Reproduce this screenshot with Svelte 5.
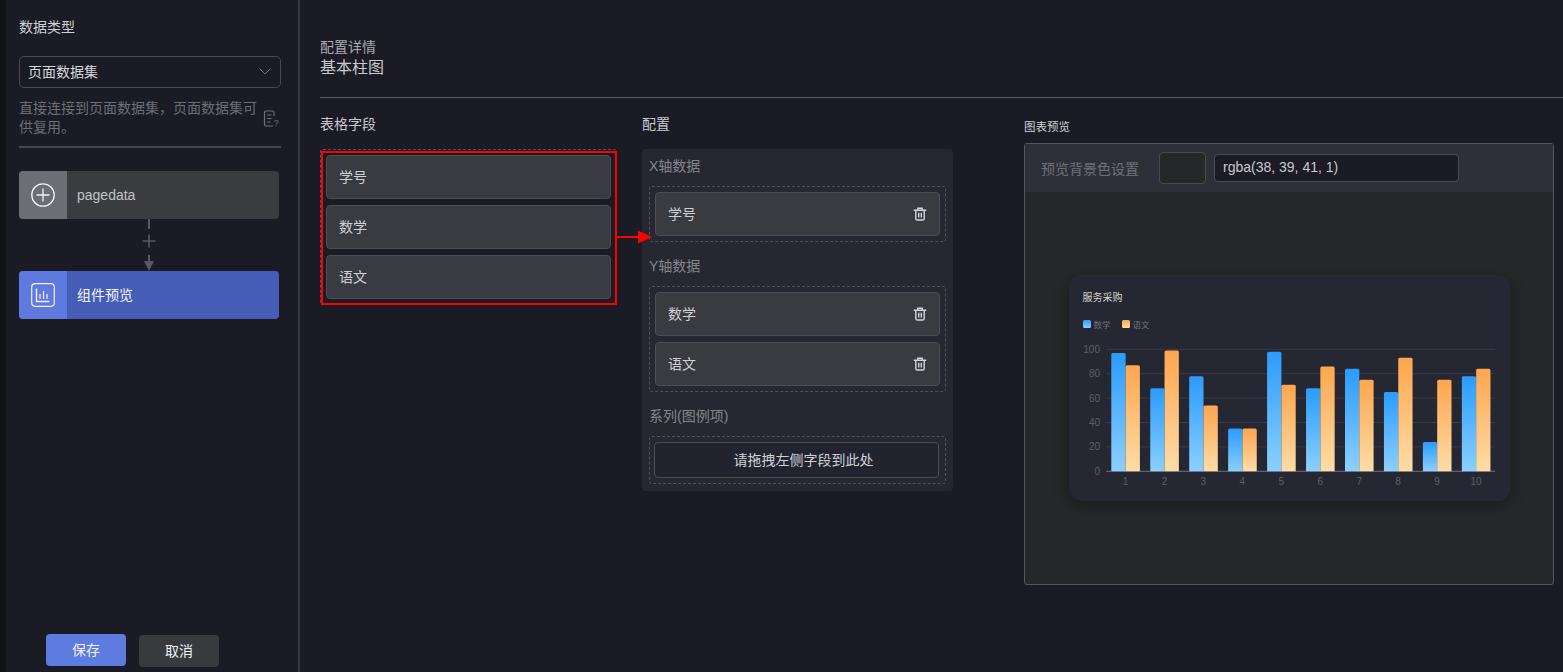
<script>
  const math = [97, 68, 78, 35, 98, 68, 84, 65, 24, 78];
  const chinese = [87, 99, 54, 35, 71, 86, 75, 93, 75, 84];
  const ticks = [0, 20, 40, 60, 80, 100];
  const y0 = 131.3;
  const unit = 1.22;
  const step = 38.95;
  const fields = ['学号', '数学', '语文'];
</script>

{#snippet trash()}
  <svg class="trash" viewBox="0 0 14 14" width="14" height="14" fill="none" stroke="#d5d6da" stroke-width="1.4">
    <path d="M.8 3.200h12.400M4.800 3V1.200h4.400V3M2.800 3.400v8.200c0 .8.4 1.400 1.200 1.400h6c.8 0 1.200-.6 1.200-1.400V3.400" />
    <path d="M5.700 5.800v4.600M8.300 5.800v4.600" />
  </svg>
{/snippet}

<div class="page">
  <div class="strip"></div>
  <aside class="side">
    <div class="side-title">数据类型</div>
    <div class="select">
      <span>页面数据集</span>
      <svg viewBox="0 0 12 7" width="12" height="7" fill="none" stroke="#70727a" stroke-width="1"><path d="M.5.500l5.500 5.500 5.500-5.500" /></svg>
    </div>
    <div class="desc">
      <p>直接连接到页面数据集，页面数据集可供复用。</p>
      <svg viewBox="0 0 16 17" width="16" height="17" fill="none" stroke="#6d6f77" stroke-width="1.200">
        <path d="M10 16H3c-.9 0-1.500-.6-1.500-1.500v-12C1.500 1.600 2.100 1 3 1h6.500c.9 0 1.500.6 1.500 1.500V6" />
        <path d="M4 5h4.500M4 8.500h4.500M4 12h3.500" />
        <text class="q" x="10.800" y="15.500" fill="#6d6f77" stroke="none">?</text>
      </svg>
    </div>
    <div class="side-line"></div>

    <div class="node">
      <div class="node-icon">
        <svg viewBox="0 0 24 24" width="24" height="24" fill="none" stroke="#f2f2f4" stroke-width="1.300">
          <circle cx="12" cy="12" r="11.200" /><path d="M12 5.500v13M5.500 12h13" />
        </svg>
      </div>
      <span class="latin">pagedata</span>
    </div>
    <svg class="link" viewBox="0 0 16 52" width="16" height="52" fill="none" stroke="#575961" stroke-width="2">
      <path d="M8 0v10" />
      <path d="M8 15.500v13M1.500 22h13" stroke-width="1.600" />
      <path d="M8 36v8" />
      <path d="M3 42h10l-5 10z" fill="#575961" stroke="none" />
    </svg>
    <div class="node active">
      <div class="node-icon">
        <svg viewBox="0 0 24 24" width="24" height="24" fill="none" stroke="#f2f2f8" stroke-width="1.200">
          <rect x=".7" y=".7" width="22.600" height="22.600" rx="3.500" />
          <path d="M5.500 5.500v13h13" stroke-width="1.400" /><path d="M9 11v5M12.500 8v8M16 11v5" />
        </svg>
      </div>
      <span>组件预览</span>
    </div>

    <div class="actions">
      <button class="save"><span>保存</span></button>
      <button class="cancel"><span>取消</span></button>
    </div>
  </aside>

  <main class="main">
    <header class="head">
      <div class="crumb">配置详情</div>
      <div class="name">基本柱图</div>
    </header>
    <div class="rule"></div>

    <div class="columns">
      <section class="col-fields">
        <h3>表格字段</h3>
        <div class="field-box">
          {#each fields as f}
            <div class="item">{f}</div>
          {/each}
          <div class="red-frame"></div>
          <svg class="red-arrow" viewBox="0 0 35 14" width="35" height="14">
            <path d="M0 6h21v-5.500l14 6.500-14 6.500v-5.500H0z" fill="#ff0000" />
          </svg>
        </div>
      </section>

      <section class="col-config">
        <h3>配置</h3>
        <div class="panel">
          <div class="axis">X轴数据</div>
          <div class="drop">
            <div class="item">学号 {@render trash()}</div>
          </div>
          <div class="axis">Y轴数据</div>
          <div class="drop">
            <div class="item">数学 {@render trash()}</div>
            <div class="item">语文 {@render trash()}</div>
          </div>
          <div class="axis">系列(图例项)</div>
          <div class="drop tight">
            <div class="placeholder">请拖拽左侧字段到此处</div>
          </div>
        </div>
      </section>

      <section class="col-preview">
        <h4>图表预览</h4>
        <div class="preview">
          <div class="bar">
            <span class="bar-label">预览背景色设置</span>
            <div class="swatch"></div>
            <div class="color-input">rgba(38, 39, 41, 1)</div>
          </div>
          <div class="stage">
            <div class="card">
              <div class="card-title">服务采购</div>
              <div class="legend">
                <i class="blue"></i><span>数学</span>
                <i class="orange"></i><span>语文</span>
              </div>
              <svg class="plot" viewBox="0 0 441 161" width="441" height="161">
                <defs>
                  <linearGradient id="gb" x1="0" y1="0" x2="0" y2="1">
                    <stop offset="0" stop-color="#2b9bfd" /><stop offset="1" stop-color="#8bd0fe" />
                  </linearGradient>
                  <linearGradient id="go" x1="0" y1="0" x2="0" y2="1">
                    <stop offset="0" stop-color="#fda64f" /><stop offset="1" stop-color="#fedca6" />
                  </linearGradient>
                </defs>
                {#each ticks as t}
                  <line x1="37" x2="426" y1={y0 - t * unit} y2={y0 - t * unit} stroke={t === 0 ? '#6e7078' : '#383a44'} />
                  <text class="tick" x="31" y={y0 - t * unit + 3.500} text-anchor="end">{t}</text>
                {/each}
                {#each math as v, i}
                  <path fill="url(#gb)" d={`M${42.3 + i * step} ${y0}v${-(v * unit - 1.500)}q0 -1.500 1.500 -1.500h11.300q1.500 0 1.500 1.500v${v * unit - 1.500}z`} />
                  <path fill="url(#go)" d={`M${56.6 + i * step} ${y0}v${-(chinese[i] * unit - 1.500)}q0 -1.500 1.500 -1.500h11.300q1.500 0 1.500 1.500v${chinese[i] * unit - 1.500}z`} />
                  <text class="tick" x={56.5 + i * step} y="145" text-anchor="middle">{i + 1}</text>
                {/each}
              </svg>
            </div>
          </div>
        </div>
      </section>
    </div>
  </main>
</div>

<style>
  :global(body) {
    margin: 0;
    background: #1a1b24;
  }
  .page {
    display: flex;
    height: 672px;
    overflow: hidden;
    background: #1a1b24;
    color: #c9cad0;
    font-family: "Liberation Sans", "Noto Sans CJK SC", sans-serif;
    font-size: 14px;
  }
  .strip {
    width: 6px;
    flex: none;
    background: #111214;
  }
  .side {
    width: 294px;
    flex: none;
    box-sizing: border-box;
    padding: 19px 17px 5px 13px;
    display: flex;
    flex-direction: column;
    border-right: 2px solid #37383d;
  }
  .side-title {
    font-size: 14px;
    line-height: 17px;
    color: #d0d1d6;
  }
  .select {
    margin-top: 20px;
    height: 32px;
    box-sizing: border-box;
    border: 1px solid #4a4b52;
    border-radius: 5px;
    padding: 0 9px 2px 8px;
    display: flex;
    align-items: center;
    justify-content: space-between;
    color: #d6d7db;
  }
  .desc {
    margin-top: 11px;
    display: flex;
    align-items: center;
    justify-content: space-between;
    color: #6d6f77;
    line-height: 19px;
  }
  .desc p {
    margin: 0;
    width: 240px;
  }
  .desc svg {
    margin-right: 2px;
  }
  .q {
    font-size: 9px;
    font-family: "Liberation Sans", sans-serif;
  }
  .side-line {
    margin-top: 9px;
    height: 2px;
    background: #46474e;
  }
  .node {
    margin-top: 23px;
    width: 260px;
    height: 48px;
    flex: none;
    display: flex;
    align-items: center;
    border-radius: 4px;
    overflow: hidden;
    background: #3b3c40;
    color: #c2c3c9;
  }
  .node span {
    margin: 0 0 2px 10px;
  }
  .node span.latin {
    margin-bottom: 0;
  }
  .node-icon {
    width: 48px;
    height: 48px;
    display: flex;
    align-items: center;
    justify-content: center;
    background: #6c6e76;
  }
  .node.active {
    margin-top: 0;
    background: #465db8;
    color: #f4f5fa;
  }
  .node.active .node-icon {
    background: #5e7adf;
  }
  .link {
    display: block;
    margin-left: 122px;
    flex: none;
  }
  .actions {
    margin-top: auto;
    display: flex;
    margin-left: 27px;
    gap: 13px;
    align-items: flex-start;
  }
  .actions button {
    width: 80px;
    height: 32px;
    border: 0;
    border-radius: 4px;
    font: inherit;
    color: #f0f1f4;
    padding: 0 0 2px;
  }
  .save {
    background: #5e7ce0;
  }
  .cancel {
    background: #393a3e;
    margin-top: 1px;
  }
  .main {
    flex: 1;
    min-width: 0;
    padding-left: 20px;
  }
  .head {
    padding-top: 38px;
    height: 59px;
  }
  .crumb {
    font-size: 14px;
    line-height: 19px;
    color: #a9aab0;
  }
  .name {
    font-size: 16px;
    line-height: 22px;
    color: #c9cad0;
  }
  .rule {
    height: 1px;
    background: #5b5c62;
  }
  .columns {
    display: flex;
    align-items: flex-start;
  }
  h3,
  h4 {
    margin: 0;
    font-weight: 400;
    color: #c9cad0;
  }
  h3 {
    font-size: 14px;
    line-height: 17px;
    height: 33px;
    padding-top: 18px;
  }
  .col-fields {
    width: 297px;
    margin-right: 25px;
    flex: none;
  }
  .field-box {
    position: relative;
    box-sizing: border-box;
    height: 156px;
    border: 1px dashed #53545c;
    border-radius: 3px;
    padding: 5px;
    display: flex;
    flex-direction: column;
    gap: 6px;
  }
  .item {
    height: 44px;
    flex: none;
    box-sizing: border-box;
    border: 1px solid #4c4d55;
    border-radius: 4px;
    background: #3a3b40;
    padding: 0 12px 2px;
    display: flex;
    align-items: center;
    justify-content: space-between;
    color: #cfd0d5;
  }
  .red-frame {
    position: absolute;
    left: 0;
    top: 1px;
    width: 296px;
    height: 154px;
    box-sizing: border-box;
    border: 2px solid #ff0000;
    pointer-events: none;
  }
  .red-arrow {
    position: absolute;
    left: 296px;
    top: 80px;
  }
  .col-config {
    width: 311px;
    margin-right: 71px;
    flex: none;
  }
  .panel {
    box-sizing: border-box;
    height: 342px;
    background: #262730;
    border-radius: 4px;
    padding: 7px;
  }
  .axis {
    height: 20px;
    line-height: 20px;
    margin-bottom: 10px;
    color: #85868c;
  }
  .drop {
    box-sizing: border-box;
    border: 1px dashed #50515a;
    border-radius: 3px;
    padding: 5px;
    display: flex;
    flex-direction: column;
    gap: 6px;
    margin-bottom: 14px;
  }
  .drop.tight {
    padding: 5px 6px 5px 4px;
    margin-bottom: 0;
  }
  .placeholder {
    height: 36px;
    box-sizing: border-box;
    border: 1px solid #4a4c56;
    border-radius: 4px;
    background: #21242f;
    display: flex;
    align-items: center;
    justify-content: center;
    color: #d0d2d8;
    padding: 0 0 2px 14px;
  }
  .trash {
    margin-top: 2px;
  }
  .col-preview {
    width: 530px;
    flex: none;
  }
  h4 {
    font-size: 11.500px;
    line-height: 16px;
    padding-top: 21px;
    height: 24px;
    color: #d0d1d6;
  }
  .preview {
    box-sizing: border-box;
    height: 442px;
    border: 1px solid #55565d;
    border-radius: 3px;
    background: #262729;
    display: flex;
    flex-direction: column;
  }
  .bar {
    height: 48px;
    flex: none;
    background: #2e2f39;
    display: flex;
    align-items: center;
    padding-left: 16px;
  }
  .bar-label {
    width: 118px;
    color: #6f7179;
    padding-bottom: 1px;
  }
  .swatch {
    width: 47px;
    height: 32px;
    box-sizing: border-box;
    border: 1px solid #4a4b52;
    border-radius: 4px;
    background: #262729;
  }
  .color-input {
    margin-left: 8px;
    width: 245px;
    height: 28px;
    box-sizing: border-box;
    border: 1px solid #4a4b52;
    border-radius: 4px;
    background: #1a1b24;
    color: #c9cad0;
    line-height: 25px;
    padding-left: 8px;
  }
  .stage {
    flex: 1;
    display: flex;
    align-items: center;
    justify-content: center;
  }
  .card {
    width: 441px;
    height: 226px;
    border-radius: 12px;
    background: #252733;
    box-shadow: 0 4px 16px rgba(0, 0, 0, 0.3);
    overflow: hidden;
  }
  .card-title {
    margin: 17px 0 0 14px;
    font-size: 10px;
    line-height: 12px;
    color: #d9d6cf;
  }
  .legend {
    margin: 14px 0 0 14px;
    height: 12px;
    display: flex;
    align-items: center;
    font-size: 8.500px;
    color: #70727a;
  }
  .legend i {
    width: 8px;
    height: 8px;
    border-radius: 1.500px;
  }
  .legend span {
    margin: 0 11px 0 3px;
  }
  .blue {
    background: linear-gradient(#2b9bfd, #8bd0fe);
  }
  .orange {
    background: linear-gradient(#fda64f, #fedca6);
  }
  .plot {
    display: block;
    margin-top: 10px;
  }
  .tick {
    font-size: 10px;
    fill: #5d5f68;
    font-family: "Liberation Sans", sans-serif;
  }
</style>
